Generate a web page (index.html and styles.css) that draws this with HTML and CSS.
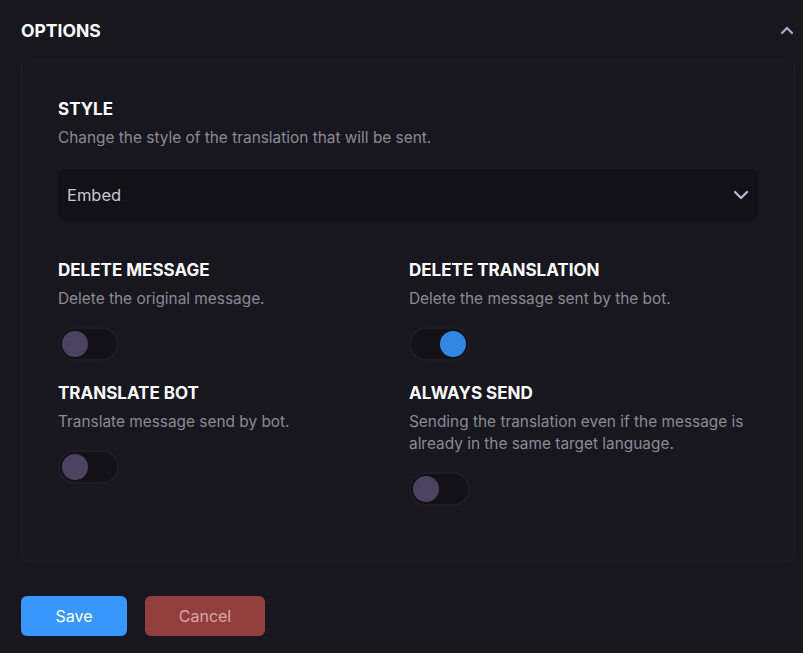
FILE: index.html
```html
<!DOCTYPE html>
<html>
<head>
<meta charset="utf-8">
<link rel="stylesheet" href="styles.css">
</head>
<body>
<div class="page">
  <div class="header">
    <span class="header-title">OPTIONS</span>
    <svg class="chev-up" width="14" height="10" viewBox="0 0 14 10"><path d="M2 8 L7 3 L12 8" fill="none" stroke="#a9a5c2" stroke-width="2.4" stroke-linecap="round" stroke-linejoin="round"/></svg>
  </div>
  <div class="card">
    <div class="field">
      <div class="title">STYLE</div>
      <div class="desc">Change the style of the translation that will be sent.</div>
      <div class="select">
        <span>Embed</span>
        <svg width="16" height="10" viewBox="0 0 16 10"><path d="M2 2 L8 8 L14 2" fill="none" stroke="#b9b5cf" stroke-width="2.4" stroke-linecap="round" stroke-linejoin="round"/></svg>
      </div>
    </div>
    <div class="grid">
      <div class="item">
        <div class="title">DELETE MESSAGE</div>
        <div class="desc">Delete the original message.</div>
        <div class="toggle"><span class="knob"></span></div>
      </div>
      <div class="item">
        <div class="title">DELETE TRANSLATION</div>
        <div class="desc">Delete the message sent by the bot.</div>
        <div class="toggle on"><span class="knob"></span></div>
      </div>
      <div class="item">
        <div class="title">TRANSLATE BOT</div>
        <div class="desc">Translate message send by bot.</div>
        <div class="toggle"><span class="knob"></span></div>
      </div>
      <div class="item">
        <div class="title">ALWAYS SEND</div>
        <div class="desc">Sending the translation even if the message is already in the same target language.</div>
        <div class="toggle"><span class="knob"></span></div>
      </div>
    </div>
  </div>
  <div class="actions">
    <button class="btn save">Save</button>
    <button class="btn cancel">Cancel</button>
  </div>
</div>
</body>
</html>
```

FILE: styles.css
```css
* { box-sizing: border-box; }
html, body { margin: 0; padding: 0; }
body {
  background: #18171f;
  font-family: Inter, "Noto Sans", sans-serif;
  color: #ffffff;
  width: 803px;
  height: 653px;
  overflow: hidden;
}
.page {
  padding: 18px 8px 0 21px;
}
.header {
  display: flex;
  align-items: center;
  justify-content: space-between;
  height: 24px;
}
.header-title {
  font-size: 17.5px;
  font-weight: 700;
}
.chev-up { margin-right: 1px; }
.card {
  margin-top: 18px;
  border: 1px solid #201f29;
  border-radius: 8px;
  padding: 36px 36px 55px 36px;
}
.title {
  font-size: 17px;
  font-weight: 700;
  line-height: 24px;
  color: #ffffff;
}
.desc {
  font-size: 15.4px;
  line-height: 22px;
  color: #8b8a94;
  margin-top: 6px;
}
.select {
  margin-top: 20px;
  height: 52px;
  width: 700px;
  background: #121117;
  border-radius: 7px;
  display: flex;
  align-items: center;
  justify-content: space-between;
  padding: 0 9px 0 9px;
  font-size: 16.5px;
  color: #c9c7d3;
}
.grid {
  margin-top: 37px;
  display: grid;
  grid-template-columns: 351px 1fr;
  row-gap: 20px;
}
.toggle {
  margin-top: 17px;
  width: 61px;
  height: 34px;
  border-radius: 17px;
  background: #121117;
  border: 2px solid #1e1d27;
  display: flex;
  align-items: center;
  padding: 0 2px;
}
.knob {
  width: 26px;
  height: 26px;
  border-radius: 50%;
  background: #4a4460;
}
.toggle.on { justify-content: flex-end; }
.toggle.on .knob { background: #3585e3; }
.actions {
  margin-top: 34px;
  display: flex;
  gap: 18px;
}
.btn {
  height: 40px;
  border: none;
  border-radius: 6px;
  font-family: Inter, "Noto Sans", sans-serif;
  font-size: 16px;
}
.save { width: 106px; background: #3797fd; color: #ffffff; }
.cancel { width: 120px; background: #933e3e; color: #d9a5a5; }
```
